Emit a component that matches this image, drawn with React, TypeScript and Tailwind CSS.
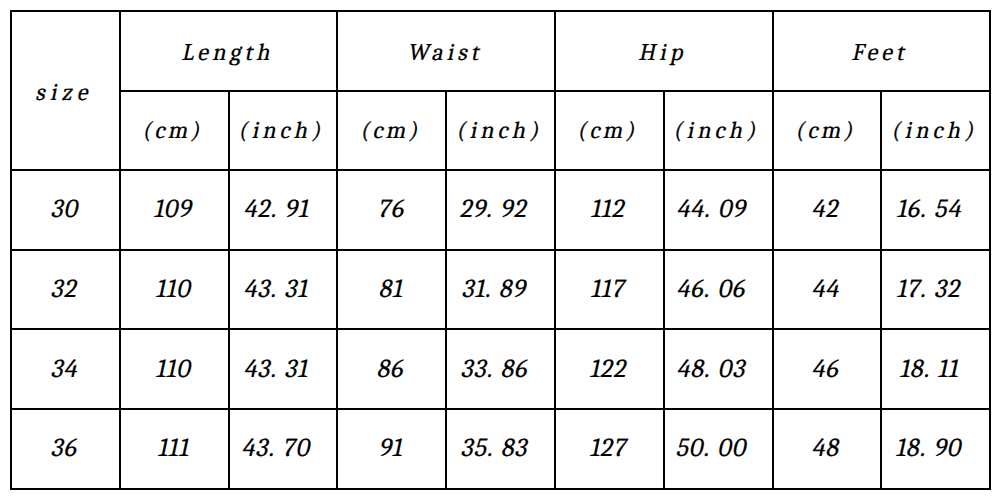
import { Fragment } from 'react';

const groups = ['Length', 'Waist', 'Hip', 'Feet'];

const rows = [
  ['30', '109', '42.91', '76', '29.92', '112', '44.09', '42', '16.54'],
  ['32', '110', '43.31', '81', '31.89', '117', '46.06', '44', '17.32'],
  ['34', '110', '43.31', '86', '33.86', '122', '48.03', '46', '18.11'],
  ['36', '111', '43.70', '91', '35.83', '127', '50.00', '48', '18.90'],
];

const cell = 'border-2 border-black text-center align-middle p-0 font-normal';

// roman glyphs slanted, like the synthetic oblique of the original
function Slant({ children, className = '' }: { children: React.ReactNode; className?: string }) {
  return (
    <span className={`inline-block font-serif not-italic -skew-x-12 [-webkit-text-stroke:0.2px_black] ${className}`}>
      {children}
    </span>
  );
}

function Num({ value }: { value: string }) {
  const [a, b] = value.split('.');
  if (b === undefined) return <Slant className="text-[26px] tracking-[1px]">{a}</Slant>;
  return (
    <Slant className="text-[26px] tracking-[1px] mr-[11px]">
      {a}
      <span className="inline-block w-[14px] text-left">.</span>
      {b}
    </Slant>
  );
}

export default function App() {
  return (
    <div className="w-[1000px] h-[499px] bg-white pt-[10px] pl-[10px] overflow-hidden text-black font-serif">
      <table className="table-fixed border-collapse w-[980px]">
        <colgroup>
          {Array.from({ length: 9 }).map((_, i) => (
            <col key={i} className="w-[108.8px]" />
          ))}
        </colgroup>
        <thead>
          <tr className="h-[79.6px]">
            <th rowSpan={2} className={cell}>
              <Slant className="text-[24px] tracking-[5px] relative top-[1px]">size</Slant>
            </th>
            {groups.map((g) => (
              <th key={g} colSpan={2} className={cell}>
                <Slant className="text-[24px] tracking-[4px] relative top-[1px]">{g}</Slant>
              </th>
            ))}
          </tr>
          <tr className="h-[79.6px]">
            {groups.map((g) => (
              <Fragment key={g}>
                <th className={cell}>
                  <Slant className="text-[24px] tracking-[3px]">(cm)</Slant>
                </th>
                <th className={cell}>
                  <Slant className="text-[24px] tracking-[4px]">(inch)</Slant>
                </th>
              </Fragment>
            ))}
          </tr>
        </thead>
        <tbody>
          {rows.map((r) => (
            <tr key={r[0]} className="h-[79.6px]">
              {r.map((v, i) => (
                <td key={i} className={cell}>
                  <Num value={v} />
                </td>
              ))}
            </tr>
          ))}
        </tbody>
      </table>
    </div>
  );
}
